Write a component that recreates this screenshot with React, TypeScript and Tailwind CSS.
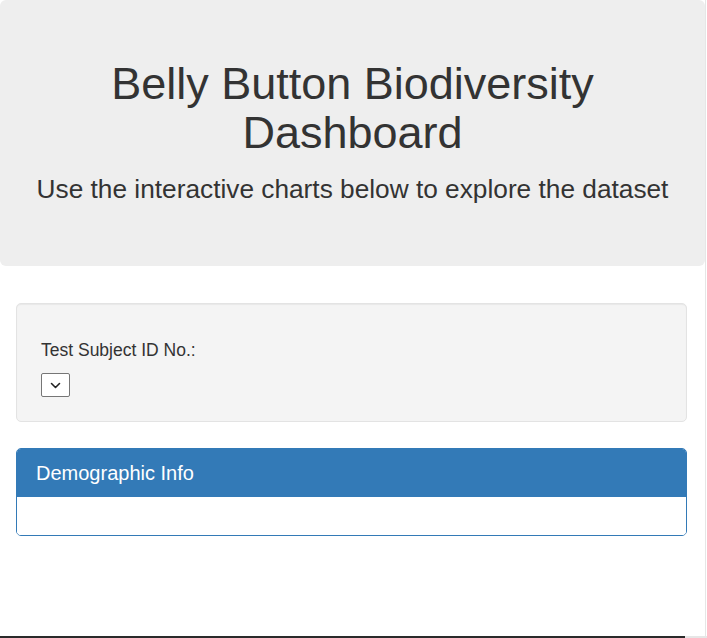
import React from 'react';

const App: React.FC = () => {
  return (
    <div className="w-[707px] h-[638px] bg-white overflow-hidden font-['Liberation_Sans',Arial,sans-serif] text-[#333] flex flex-col">
      <div className="flex-1 flex flex-col w-[706px] border-r border-[#e6e6e6]">
        <header className="bg-[#eee] rounded-md h-[266px] flex flex-col items-center pt-[59px] text-center">
          <h1 className="text-[45px] leading-[49px] font-normal w-[560px]">Belly Button Biodiversity Dashboard</h1>
          <p className="text-[26.25px] leading-[30px] mt-[17px]">Use the interactive charts below to explore the dataset</p>
        </header>

        <div className="ml-4 w-[671px] mt-[37px] flex flex-col gap-[26px]">
          <div className="h-[119px] bg-[#f4f4f4] border border-[#e3e3e3] rounded-[5px] px-6 pt-[36px] shadow-[inset_0_1px_1px_rgba(0,0,0,0.05)]">
            <label className="block text-[17.5px] leading-[20px]">Test Subject ID No.:</label>
            <div className="mt-[13px] w-[29px] h-[24px] bg-white border border-[#767676] rounded-[2px] flex items-center justify-center">
              <svg width="11" height="7" viewBox="0 0 11 7" fill="none" stroke="#222" strokeWidth="1.6" strokeLinecap="round" strokeLinejoin="round">
                <path d="M1.5 1.5 L5.5 5.5 L9.5 1.5" />
              </svg>
            </div>
          </div>

          <div className="h-[88px] border border-[#337ab7] rounded-[5px] overflow-hidden flex flex-col">
            <div className="h-[48px] bg-[#337ab7] text-white text-[20px] leading-[24px] px-[19px] flex items-center">Demographic Info</div>
            <div className="flex-1 bg-white" />
          </div>
        </div>
      </div>
      <div className="h-[2px] flex">
        <div className="w-[685px] bg-[#2a2a2a]" />
        <div className="flex-1 bg-[#e6e6e6]" />
      </div>
    </div>
  );
};

export default App;
